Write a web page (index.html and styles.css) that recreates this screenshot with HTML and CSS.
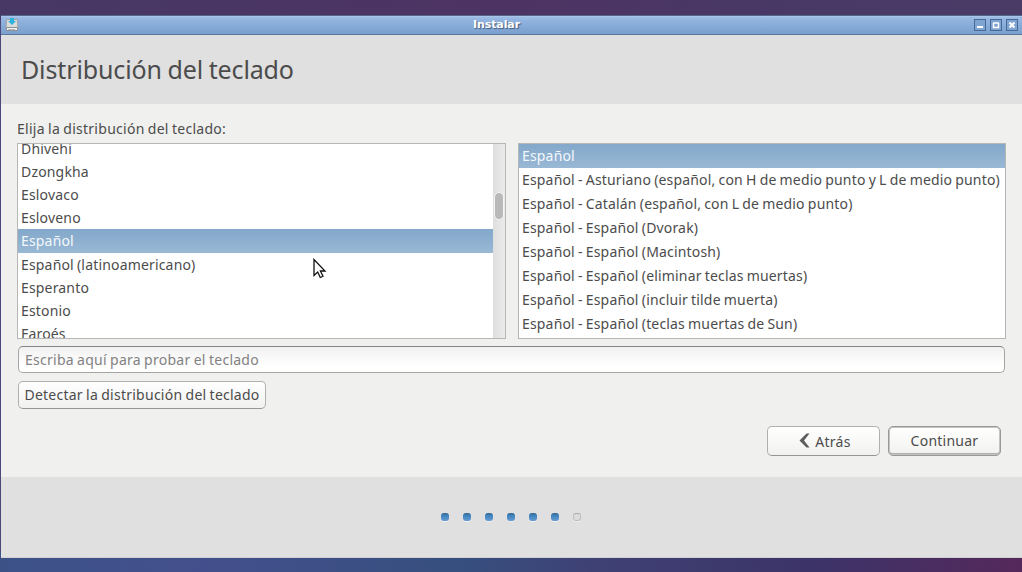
FILE: index.html
```html
<!DOCTYPE html>
<html lang="es">
<head>
<meta charset="utf-8">
<title>Instalar</title>
<link rel="stylesheet" href="styles.css">
</head>
<body>
<main class="window">
  <header class="titlebar">
    <svg class="app-icon" width="14" height="16" viewBox="0 0 14 16">
      <path d="M1.500 2.500h11l.5 9H1z" fill="#d9dbdb" stroke="#9ba2a6"/>
      <path d="M1.500 10.500h11v3h-11z" fill="#eeeeec" stroke="#8b9296"/>
      <path d="M3 12.500h7" stroke="#b8bab8"/>
      <path d="M5 1h4v3h2L7 8 3 4h2z" fill="#2cb2dd"/>
    </svg>
    <span class="title">Instalar</span>
    <div class="controls">
      <svg width="12" height="12"><rect class="frame" x=".5" y=".5" width="11" height="11"/><path d="M3 8h6" class="mark"/></svg>
      <svg width="12" height="12"><rect class="frame" x=".5" y=".5" width="11" height="11"/><path d="M3 4h6M3.500 4v4.500h5V4" class="mark box"/></svg>
      <svg width="12" height="12"><rect class="frame" x=".5" y=".5" width="11" height="11"/><path d="M3.500 3.500l5 5M8.500 3.500l-5 5" class="mark"/></svg>
    </div>
  </header>
  <section class="heading"><h1>Distribución del teclado</h1></section>
  <section class="content">
    <p class="prompt">Elija la distribución del teclado:</p>
    <div class="lists">
      <div class="list languages">
        <ul>
          <li>Dhivehi</li>
          <li>Dzongkha</li>
          <li>Eslovaco</li>
          <li>Esloveno</li>
          <li class="selected">Español</li>
          <li>Español (latinoamericano)</li>
          <li>Esperanto</li>
          <li>Estonio</li>
          <li>Faroés</li>
        </ul>
        <div class="scrollbar"><div class="thumb"></div></div>
      </div>
      <div class="list variants">
        <ul>
          <li class="selected">Español</li>
          <li>Español - Asturiano (español, con H de medio punto y L de medio punto)</li>
          <li>Español - Catalán (español, con L de medio punto)</li>
          <li>Español - Español (Dvorak)</li>
          <li>Español - Español (Macintosh)</li>
          <li>Español - Español (eliminar teclas muertas)</li>
          <li>Español - Español (incluir tilde muerta)</li>
          <li>Español - Español (teclas muertas de Sun)</li>
        </ul>
      </div>
    </div>
    <input class="tester" type="text" placeholder="Escriba aquí para probar el teclado">
    <button class="button detect">Detectar la distribución del teclado</button>
    <div class="actions">
      <button class="button back"><svg width="11" height="16" viewBox="0 0 11 16"><path d="M7.500 .5h3L5 7.500l5.500 7h-3L.5 7.500z" fill="#5c5c5c"/></svg>Atrás</button>
      <button class="button next">Continuar</button>
    </div>
  </section>
  <footer class="progress"><i></i><i></i><i></i><i></i><i></i><i></i><i class="pending"></i></footer>
</main>
<svg class="cursor" width="14" height="21" viewBox="0 0 14 21"><path d="M1 1.500v16l3.700-3.500 2.600 5.500 2.700-1.200-2.600-5.300H12z" fill="#fff" stroke="#111" stroke-width="1.300"/></svg>
</body>
</html>
```
FILE: styles.css
```css
* { box-sizing: border-box; }

body {
  margin: 0;
  height: 572px;
  padding-top: 15px;
  overflow: hidden;
  background:
    linear-gradient(90deg, #473866, #4d3363 50%, #483967 80%, #493b66) top / 100% 20px no-repeat,
    linear-gradient(90deg, #3c5287, #434f8c 20%, #364f7e 45%, #3f4175 58%, #3c3368 80%, #55285b) bottom / 100% 20px no-repeat,
    #4a477a;
  font-family: "Noto Sans", "Open Sans", sans-serif;
  font-size: 14px;
  letter-spacing: .17px;
  word-spacing: -.7px;
  color: #4c4c4c;
}

.window {
  display: flex;
  flex-direction: column;
  height: 543px;
  margin-left: 1px;
  background: #f0f0ee;
}

.titlebar {
  display: grid;
  grid-template-columns: 44px 1fr 44px;
  align-items: center;
  height: 20px;
  padding: 0 4px;
  border-top: 1px solid #55658b;
  border-bottom: 1px solid #57779f;
  background: linear-gradient(#a1bfe6, #91b3de 25%, #7a9fce);
  box-shadow: inset 0 1px #a9c5e9;
}

.app-icon { display: block; }

.title {
  font: bold 11px/18px "DejaVu Sans", sans-serif;
  letter-spacing: -.1px;
  color: #fff;
  text-align: center;
  text-shadow: 1px 1px 1px #415c83;
  margin-top: -1px;
  padding-right: 30px;
}

.controls { display: flex; gap: 4px; }
.frame { fill: #7fa4d2; stroke: #466a97; }
.mark { fill: none; stroke: #fff; stroke-width: 2; }
.mark.box { stroke-width: 1.500; }

.heading {
  height: 69px;
  padding: 17px 20px;
  background: #e0e0e0;
}

h1 {
  margin: 0;
  font-size: 25px;
  line-height: 35px;
  font-weight: 400;
  letter-spacing: -.13px;
  white-space: nowrap;
}

.content { height: 373px; padding: 14px 16px 0; }
.prompt { margin: 0; height: 25px; line-height: 22px; letter-spacing: .27px; }
.lists { display: grid; grid-template-columns: 489px 488px; gap: 12px; height: 196px; }

.list {
  display: flex;
  overflow: hidden;
  border: 1px solid #b6b6b4;
  background: #fff;
}

.list ul { flex: 1; margin: 0; padding: 0; list-style: none; }
.list li { height: 24px; padding-left: 3px; line-height: 24px; white-space: nowrap; }
.languages ul { margin-top: -7px; }
.languages li:not(.selected) { height: 23px; }

.list .selected {
  color: #f4f8fb;
  background: linear-gradient(#83a8ca, #99b8d5);
}

.scrollbar {
  width: 12px;
  padding: 48px 1px 0;
  background: linear-gradient(90deg, #dedede, #ebebeb);
}

.thumb {
  height: 28px;
  border: 1px solid #f5f5f5;
  border-radius: 5px;
  background: #b9b9b9;
}

.tester {
  display: block;
  width: 987px;
  height: 27px;
  margin: 7px 1px;
  padding: 0 6px 1px;
  border: 1px solid #a5a5a3;
  border-top-color: #858583;
  border-radius: 5px;
  background: linear-gradient(#f1f1f1, #fff 75%);
  font: inherit;
  letter-spacing: .26px;
  word-spacing: -.7px;
}
.tester::placeholder { color: #828282; opacity: 1; }

.button {
  display: flex;
  align-items: center;
  justify-content: center;
  padding: 0;
  border: 1px solid #b0b0ae;
  border-bottom-color: #969694;
  border-radius: 5px;
  background: linear-gradient(#fff, #f1f1f0);
  color: #4c4c4c;
  font: inherit;
  letter-spacing: .25px;
  word-spacing: -.7px;
  white-space: nowrap;
}

.detect { width: 248px; height: 28px; margin: 8px 0 0 1px; padding-bottom: 1px; }
.actions { display: flex; justify-content: flex-end; gap: 8px; margin: 17px 5px 0 0; }
.back { width: 113px; height: 30px; gap: 5px; padding-left: 3px; }
.next {
  width: 113px;
  height: 30px;
  padding-bottom: 2px;
  border-color: #999;
  box-shadow: inset 0 0 0 1px #c3c3c1, inset 0 -2px #b0b0ae;
}

.progress {
  display: flex;
  align-items: center;
  justify-content: center;
  gap: 14px;
  height: 81px;
  padding: 0 2px 1px 0;
  border-bottom: 1px solid #d1d1d3;
  background: #e0e0e0;
}

.progress i {
  width: 8px;
  height: 8px;
  border-radius: 3px;
  background: linear-gradient(#32668f, #4387c1 40%, #689bd0);
  box-shadow: 0 1px #eee;
}
.progress .pending { background: #dcdcdc; border: 1px solid #bdbdbd; border-top-color: #aaa; }

.cursor { position: absolute; left: 313px; top: 258px; }
```
